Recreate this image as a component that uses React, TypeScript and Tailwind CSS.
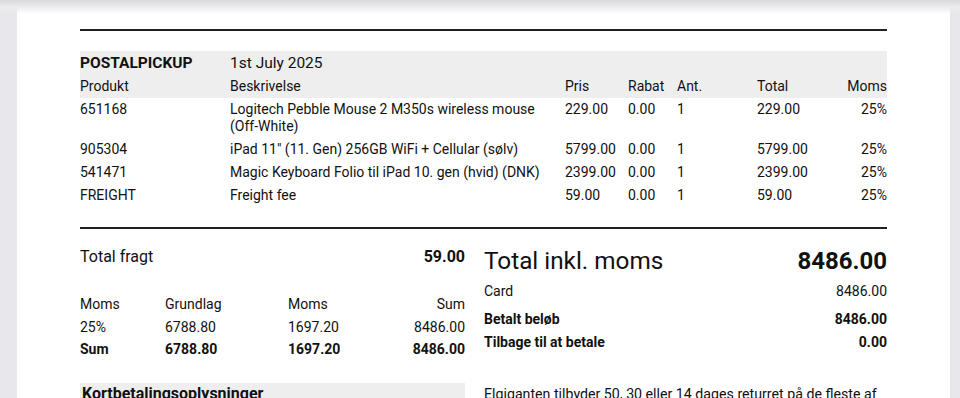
import React from "react";

const rows = [
  { p: "651168", d: ["Logitech Pebble Mouse 2 M350s wireless mouse", "(Off-White)"], pris: "229.00", total: "229.00" },
  { p: "905304", d: ['iPad 11" (11. Gen) 256GB WiFi + Cellular (sølv)'], pris: "5799.00", total: "5799.00" },
  { p: "541471", d: ["Magic Keyboard Folio til iPad 10. gen (hvid) (DNK)"], pris: "2399.00", total: "2399.00" },
  { p: "FREIGHT", d: ["Freight fee"], pris: "59.00", total: "59.00" },
];

const grid = "grid grid-cols-[150px_335px_63px_49px_80px_80px_1fr]";

export default function App() {
  return (
    <div
      className="relative w-[960px] h-[398px] overflow-hidden bg-[#e8e8ec] text-[#111111]"
      style={{ fontFamily: "Roboto, 'Noto Sans', sans-serif" }}
    >
      <div className="absolute top-0 left-0 right-0 h-[14px] bg-gradient-to-b from-[#d9d9dc] via-[#ececee] to-transparent z-10" />
      <div className="ml-[17px] w-[933px] h-[398px] bg-white pl-[63px] pr-[63px] pt-[29px]">
        <div className="h-[2px] bg-[#202020]" />
        <div className="mt-[20px] bg-[#eeeeee]">
          <div className={grid + " py-[3px] leading-[18px] text-[15.5px]"}>
            <div className="font-bold col-span-1">POSTALPICKUP</div>
            <div className="col-span-6">1st July 2025</div>
          </div>
          <div className={grid + " py-[3px] leading-[17px] text-[14px]"}>
            <div>Produkt</div>
            <div>Beskrivelse</div>
            <div>Pris</div>
            <div>Rabat</div>
            <div>Ant.</div>
            <div>Total</div>
            <div className="text-right">Moms</div>
          </div>
        </div>
        {rows.map((r) => (
          <div key={r.p} className={grid + " py-[3px] leading-[17px] text-[14px]"}>
            <div>{r.p}</div>
            <div>
              {r.d.map((l) => (
                <div key={l}>{l}</div>
              ))}
            </div>
            <div>{r.pris}</div>
            <div>0.00</div>
            <div>1</div>
            <div>{r.total}</div>
            <div className="text-right">25%</div>
          </div>
        ))}
        <div className="mt-[20px] h-[2px] bg-[#202020]" />
        <div className="flex gap-[19px]">
          <div className="w-[385px]">
            <div className="mt-[18px] flex justify-between text-[16px] leading-[20px]">
              <span>Total fragt</span>
              <span className="font-bold">59.00</span>
            </div>
            <div className="mt-[26px] text-[14px] leading-[17px]">
              <div className="grid grid-cols-[85px_123px_1fr_1fr] py-[3px]">
                <div>Moms</div>
                <div>Grundlag</div>
                <div>Moms</div>
                <div className="text-right">Sum</div>
              </div>
              <div className="grid grid-cols-[85px_123px_1fr_1fr] py-[3px]">
                <div>25%</div>
                <div>6788.80</div>
                <div>1697.20</div>
                <div className="text-right">8486.00</div>
              </div>
              <div className="grid grid-cols-[85px_123px_1fr_1fr] pt-[2px] pb-[3px] font-bold">
                <div>Sum</div>
                <div>6788.80</div>
                <div>1697.20</div>
                <div className="text-right">8486.00</div>
              </div>
            </div>
            <div className="mt-[22px] bg-[#eeeeee] px-[2px] pt-[1px] h-[30px] text-[16px] leading-[20px] font-bold">
              Kortbetalingsoplysninger
            </div>
          </div>
          <div className="flex-1">
            <div className="mt-[17px] flex justify-between items-baseline text-[24.3px] leading-[30px]">
              <span>Total inkl. moms</span>
              <span className="font-bold text-[24px]">8486.00</span>
            </div>
            <div className="mt-[4px] flex justify-between text-[14px] leading-[17px] py-[3px]">
              <span>Card</span>
              <span>8486.00</span>
            </div>
            <div className="mt-[5px] flex justify-between text-[14px] leading-[17px] py-[3px] font-bold">
              <span>Betalt beløb</span>
              <span>8486.00</span>
            </div>
            <div className="flex justify-between text-[14px] leading-[17px] py-[3px] font-bold">
              <span>Tilbage til at betale</span>
              <span>0.00</span>
            </div>
            <div className="mt-[31px] text-[14.2px] leading-[18px] whitespace-nowrap">
              Elgiganten tilbyder 50, 30 eller 14 dages returret på de fleste af
            </div>
          </div>
        </div>
      </div>
    </div>
  );
}
